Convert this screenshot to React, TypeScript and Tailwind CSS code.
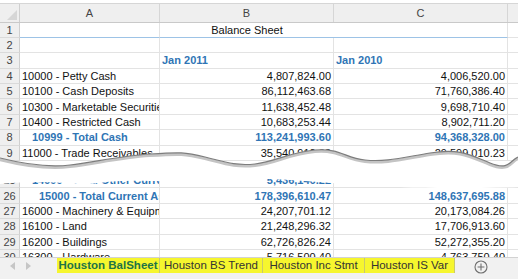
import React from 'react';

// --- Données de la feuille ---
interface SheetRow {
  n: number;
  a?: string;
  b?: string;
  c?: string;
  total?: boolean;
  indent?: string;
  kind?: 'title' | 'dates';
}

const upperRows: SheetRow[] = [
  { n: 1, b: 'Balance Sheet', kind: 'title' },
  { n: 2 },
  { n: 3, b: 'Jan 2011', c: 'Jan 2010', kind: 'dates' },
  { n: 4, a: '10000 - Petty Cash', b: '4,807,824.00', c: '4,006,520.00' },
  { n: 5, a: '10100 - Cash Deposits', b: '86,112,463.68', c: '71,760,386.40' },
  { n: 6, a: '10300 - Marketable Securities', b: '11,638,452.48', c: '9,698,710.40' },
  { n: 7, a: '10400 - Restricted Cash', b: '10,683,253.44', c: '8,902,711.20' },
  { n: 8, a: '10999 - Total Cash', b: '113,241,993.60', c: '94,368,328.00', total: true, indent: 'pl-[12px]' },
  { n: 9, a: '11000 - Trade Receivables', b: '35,540,912.28', c: '29,599,010.23' },
];

const lowerRows: SheetRow[] = [
  { n: 25, a: '14999 - Total Other Current Assets', b: '5,436,146.22', c: '4,530,121.85', total: true, indent: 'pl-[12px]' },
  { n: 26, a: '15000 - Total Current Assets', b: '178,396,610.47', c: '148,637,695.88', total: true, indent: 'pl-[19px]' },
  { n: 27, a: '16000 - Machinery & Equipment', b: '24,207,701.12', c: '20,173,084.26' },
  { n: 28, a: '16100 - Land', b: '21,248,296.32', c: '17,706,913.60' },
  { n: 29, a: '16200 - Buildings', b: '62,726,826.24', c: '52,272,355.20' },
  { n: 30, a: '16300 - Hardware', b: '5,716,500.40', c: '4,763,750.40' },
];

const tabs = [
  { label: 'Houston BalSheet', w: 'w-[103px]', active: true },
  { label: 'Houston BS Trend', w: 'w-[103px]' },
  { label: 'Houston Inc Stmt', w: 'w-[102px]' },
  { label: 'Houston IS Var', w: 'w-[90px]' },
];

// --- Une ligne de la grille ---
const Row: React.FC<{ row: SheetRow }> = ({ row }) => {
  const first = row.n === 1;
  const bottom = first ? 'border-b-[#9dc3e6]' : 'border-b-[#e3e3e3]';
  const tone = row.total ? 'text-[#2f75b5] font-bold' : 'text-[#111]';

  return (
    <div className="flex h-[15.4px] shrink-0 leading-[14px]">
      <div className="w-[20px] shrink-0 bg-[#efefef] border-r border-b border-r-[#cfcfcf] border-b-[#dadada] text-center text-[#444] flex items-center justify-center">
        {row.n}
      </div>
      <div className={`w-[140px] shrink-0 border-r border-b border-r-[#e3e3e3] ${bottom} pl-[2px] ${row.indent ?? ''} overflow-hidden whitespace-nowrap flex items-center ${tone}`}>
        {row.a}
      </div>
      <div
        className={`w-[174px] shrink-0 border-b ${first ? '' : 'border-r border-r-[#e3e3e3]'} ${bottom} px-[2px] overflow-hidden whitespace-nowrap flex items-center ${
          row.kind === 'title' ? 'justify-center text-[#111]' : row.kind === 'dates' ? 'justify-start text-[#2f75b5] font-bold' : `justify-end ${tone}`
        }`}
      >
        {row.b}
      </div>
      <div
        className={`w-[174px] shrink-0 border-r border-b border-r-[#e3e3e3] ${bottom} px-[2px] overflow-hidden whitespace-nowrap flex items-center ${
          row.kind === 'dates' ? 'justify-start text-[#2f75b5] font-bold' : `justify-end ${tone}`
        }`}
      >
        {row.c}
      </div>
      <div className="flex-1 border-b border-b-[#e3e3e3]" />
    </div>
  );
};

// --- Déchirure entre les lignes 9 et 25 ---
const TearOverlay: React.FC = () => {
  const top = 'M0,18 C20,23 45,28 70,25 S120,16 150,14 S185,12 205,17 S235,26 255,24 S290,12 315,10 S345,18 365,20 S400,18 430,13 S470,15 490,23 S510,20 518,17';
  return (
    <svg className="absolute left-0 top-[140px] pointer-events-none" width="518" height="52" viewBox="0 0 518 52">
      <path
        d={`${top} L518,47 C480,48 440,49 400,47 S330,43 290,40 S200,42 150,41 S100,45 80,44 S40,40 0,44 Z`}
        fill="#ffffff"
      />
      <path d={top} transform="translate(0,1.6)" fill="none" stroke="#c4c4c4" strokeWidth="3" />
      <path d={top} fill="none" stroke="#7d7d7d" strokeWidth="1.2" />
    </svg>
  );
};

// --- Composant Principal ---
const App: React.FC = () => {
  return (
    <div className="relative w-[518px] h-[279px] overflow-hidden bg-white flex flex-col text-[11px] font-['Liberation_Sans',Arial,sans-serif]">
      <div className="h-[4px] shrink-0 bg-white border-b border-[#d6d6d6]" />

      {/* En-têtes de colonnes */}
      <div className="flex h-[18.5px] shrink-0 bg-[#efefef] border-b border-[#c9c9c9] text-[#444]">
        <div className="w-[20px] shrink-0 border-r border-[#cfcfcf] flex items-end justify-end p-[2px]">
          <svg width="10" height="10" viewBox="0 0 10 10">
            <polygon points="10,0 10,10 0,10" fill="#d6d6d6" />
          </svg>
        </div>
        <div className="w-[140px] shrink-0 border-r border-[#d6d6d6] flex items-center justify-center">A</div>
        <div className="w-[174px] shrink-0 border-r border-[#d6d6d6] flex items-center justify-center">B</div>
        <div className="w-[174px] shrink-0 border-r border-[#d6d6d6] flex items-center justify-center">C</div>
        <div className="flex-1" />
      </div>

      {/* Grille */}
      <div className="flex-1 min-h-0 overflow-hidden flex flex-col">
        {upperRows.map((r) => (
          <Row key={r.n} row={r} />
        ))}
        <div className="h-[12px] shrink-0" />
        {lowerRows.map((r) => (
          <Row key={r.n} row={r} />
        ))}
      </div>

      {/* Onglets */}
      <div className="h-[22px] shrink-0 bg-[#f1f1f1] border-t border-[#d2d2d2] flex items-start">
        <div className="w-[57px] h-[16px] shrink-0 flex items-center gap-[11px] pl-[10px]">
          <svg width="5" height="8" viewBox="0 0 5 8">
            <polygon points="5,0 5,8 0,4" fill="#c6c6c6" />
          </svg>
          <svg width="5" height="8" viewBox="0 0 5 8">
            <polygon points="0,0 0,8 5,4" fill="#c6c6c6" />
          </svg>
        </div>
        {tabs.map((t) => (
          <div
            key={t.label}
            className={`${t.w} h-[15px] shrink-0 bg-[#f6f62e] border-r border-[#c9c96a] flex items-center justify-center whitespace-nowrap text-[11.5px] ${
              t.active ? 'font-bold text-[#217346]' : 'text-[#333]'
            }`}
          >
            {t.label}
          </div>
        ))}
        <div className="flex-1 h-[16px] flex items-center pl-[19px] pt-[1px]">
          <svg width="14" height="14" viewBox="0 0 14 14">
            <circle cx="7" cy="7" r="6" fill="none" stroke="#6f6f6f" strokeWidth="1.1" />
            <path d="M7,3.6 V10.4 M3.6,7 H10.4" stroke="#6f6f6f" strokeWidth="1.1" />
          </svg>
        </div>
      </div>

      <TearOverlay />
    </div>
  );
};

export default App;
